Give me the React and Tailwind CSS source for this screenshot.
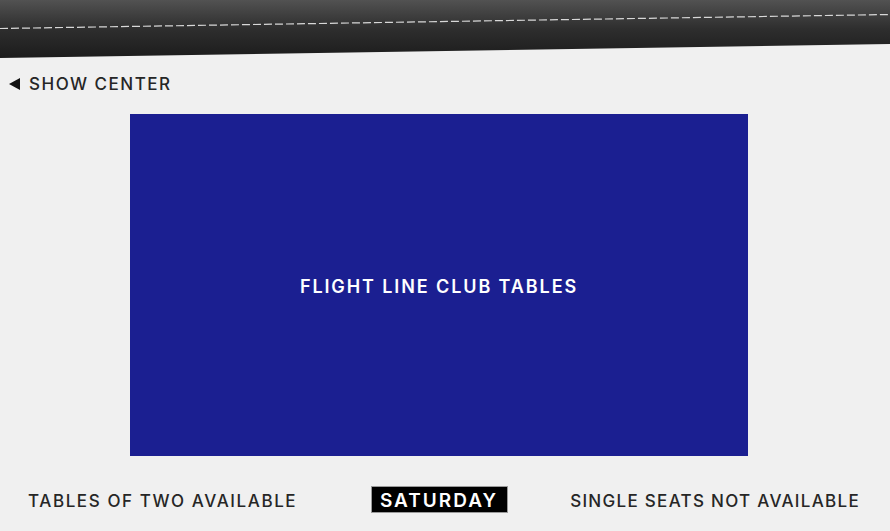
export default function App() {
  return (
    <div
      className="w-[890px] h-[531px] bg-[#f0f0f0] overflow-hidden"
      style={{ fontFamily: 'Inter, "Open Sans", "Liberation Sans", sans-serif' }}
    >
      <div className="relative h-[58px]">
        <div
          className="absolute inset-0 bg-gradient-to-b from-[#525252] via-[#2e2e2e] to-[#1c1c1c]"
          style={{ clipPath: "polygon(0 0, 100% 0, 100% 44px, 0 58px)" }}
        />
        <svg className="absolute inset-0" width="890" height="58" viewBox="0 0 890 58">
          <line x1="0" y1="28.5" x2="890" y2="14.5" stroke="#d8d8d8" strokeWidth="1.2" strokeDasharray="8 3" />
        </svg>
      </div>
      <div className="w-[878px]">
        <div className="flex items-center h-[20px] mt-[16px] pl-[9px] text-[#262626]">
          <svg width="11" height="12" viewBox="0 0 11 12" className="mr-[9px]">
            <polygon points="0,6 11,0 11,12" fill="#111" />
          </svg>
          <span className="text-[17px] font-medium tracking-[1.5px] leading-none">SHOW CENTER</span>
        </div>
        <div className="mx-auto mt-[20px] w-[618px] h-[342px] bg-[#1b1f91] flex items-center justify-center pt-[4px]">
          <span className="text-white text-[18px] font-semibold tracking-[1.9px] leading-none">
            FLIGHT LINE CLUB TABLES
          </span>
        </div>
        <div className="grid grid-cols-[1fr_auto_1fr] items-center mt-[30px] text-[#262626]">
          <span className="justify-self-start pl-[28px] text-[17px] font-medium tracking-[1.6px] leading-none pt-[3px]">
            TABLES OF TWO AVAILABLE
          </span>
          <div className="w-[137px] h-[27px] bg-black border border-[#9a9a9a] flex items-center justify-center">
            <span className="text-white text-[19px] font-semibold tracking-[2px] leading-none pt-[1px]">SATURDAY</span>
          </div>
          <span className="justify-self-end pr-[18px] text-[17px] font-medium tracking-[1.3px] leading-none pt-[3px]">
            SINGLE SEATS NOT AVAILABLE
          </span>
        </div>
      </div>
    </div>
  );
}
